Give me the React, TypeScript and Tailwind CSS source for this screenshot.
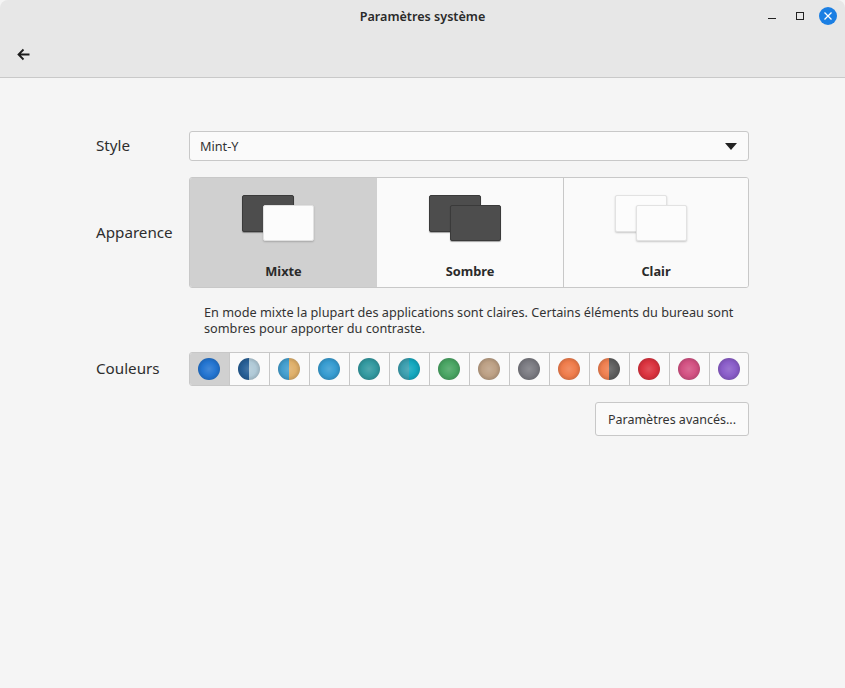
const FONT = "font-['Noto_Sans',sans-serif]";

// soft highlight in the middle, darker rim, laid over each base colour
const GLOSS = 'radial-gradient(circle at 50% 50%, rgba(255,255,255,0.16) 0%, rgba(255,255,255,0.02) 45%, rgba(0,0,0,0.28) 100%)';

const SWATCHES: string[] = [
  '#1f72d0',
  'linear-gradient(90deg, #235c94 50%, #aec8d6 50%)',
  'linear-gradient(90deg, #3f9ccd 50%, #deae67 50%)',
  '#339ad0',
  '#2f979e',
  'linear-gradient(90deg, #389cad 50%, #0ea6bd 50%)',
  '#46a360',
  '#bb9e82',
  '#78787f',
  '#ef7a48',
  'linear-gradient(90deg, #ef7d4c 50%, #5c5c5c 50%)',
  '#da2f3b',
  '#d24e80',
  '#885ac8',
];

function MiniWindows({ mode }: { mode: 'mixte' | 'sombre' | 'clair' }) {
  const dark = 'bg-[#4d4d4d] border border-[#3a3a3a] shadow-[0_1px_1px_rgba(0,0,0,0.35)]';
  const light = 'bg-[#fcfcfc] border border-[#e2e2e2] shadow-[0_1px_2px_rgba(0,0,0,0.2)]';
  return (
    <div className="relative mr-[10px] h-[47px] w-[73px]">
      <div className={`absolute left-0 top-0 h-[37px] w-[52px] rounded-[2px] ${mode === 'clair' ? light : dark}`} />
      <div className={`absolute left-[21px] top-[10px] h-[36px] w-[51px] rounded-[2px] ${mode === 'sombre' ? dark : light}`} />
    </div>
  );
}

function ThemeTile({ label, mode, active, className }: { label: string; mode: 'mixte' | 'sombre' | 'clair'; active?: boolean; className: string }) {
  return (
    <div className={`flex flex-col items-center pt-[17px] ${active ? 'bg-[#d0d0d0]' : 'bg-[#fafafa]'} ${className}`}>
      <MiniWindows mode={mode} />
      <span className="mt-[20px] text-[12.8px] leading-[18px] font-bold text-[#2a2a2a]">{label}</span>
    </div>
  );
}

export default function App() {
  return (
    <div className={`${FONT} relative h-[688px] w-[845px] overflow-hidden bg-[#f5f5f5] text-[#2e2e2e]`}>
      <header className="h-[78px] rounded-t-[8px] border-b border-[#c9c9c9] bg-[#e7e7e7]">
        <div className="relative flex h-[34px] items-center justify-center">
          <span className="text-[12.6px] font-semibold text-[#2a2a2a]">Paramètres système</span>
          <div className="absolute right-[8px] top-[7px] flex items-center">
            <svg width="10" height="10" viewBox="0 0 10 10" className="mr-[18px]">
              <path d="M1 7.5h8" stroke="#222" strokeWidth="1" />
            </svg>
            <svg width="10" height="10" viewBox="0 0 10 10" className="mr-[14px]">
              <rect x="1.5" y="1.5" width="7" height="7" fill="none" stroke="#222" strokeWidth="1" />
            </svg>
            <div className="flex h-[18px] w-[18px] items-center justify-center rounded-full bg-[#1b7fe3]">
              <svg width="10" height="10" viewBox="0 0 10 10">
                <path d="M1.5 1.5l7 7M8.5 1.5l-7 7" stroke="#fff" strokeWidth="1.3" />
              </svg>
            </div>
          </div>
        </div>
        <div className="pl-[17px] pt-[14px]">
          <svg width="13" height="13" viewBox="0 0 13 13" className="block">
            <path d="M12.5 6.5H2M6.5 1.5L1.5 6.5l5 5" fill="none" stroke="#1c1c1c" strokeWidth="1.8" />
          </svg>
        </div>
      </header>

      <main className="pl-[96px] pr-[96px] pt-[53px]">
        <div className="flex items-center">
          <label className="mb-[2px] w-[93px] text-[15.2px] leading-[20px]">Style</label>
          <div className="flex h-[30px] flex-1 items-center justify-between rounded-[3px] border border-[#c8c8c8] bg-[#fafafa] pl-[10px] pr-[11px]">
            <span className="pt-[1px] text-[12.7px] text-[#333]">Mint-Y</span>
            <svg width="12" height="7" viewBox="0 0 12 7" className="block">
              <path d="M0 0h12L6 7z" fill="#222" />
            </svg>
          </div>
        </div>

        <div className="mt-[16px] flex items-center">
          <label className="mb-[2px] w-[93px] text-[15.2px] leading-[20px]">Apparence</label>
          <div className="flex h-[111px] flex-1 overflow-hidden rounded-[3px] border border-[#c8c8c8]">
            <ThemeTile label="Mixte" mode="mixte" active className="w-[187px]" />
            <ThemeTile label="Sombre" mode="sombre" className="w-[186px]" />
            <ThemeTile label="Clair" mode="clair" className="flex-1 border-l border-[#c8c8c8]" />
          </div>
        </div>

        <p className="mt-[16px] ml-[108px] w-[540px] text-[12.7px] leading-[16px] text-[#333]">
          En mode mixte la plupart des applications sont claires. Certains éléments du bureau sont sombres pour apporter du contraste.
        </p>

        <div className="mt-[16px] flex items-center">
          <label className="mb-[2px] w-[93px] text-[15.2px] leading-[20px]">Couleurs</label>
          <div className="flex h-[34px] flex-1 overflow-hidden rounded-[3px] border border-[#c8c8c8] bg-[#fafafa]">
            {SWATCHES.map((bg, i) => (
              <div
                key={i}
                className={`flex items-center justify-center pr-[1px] ${i === 0 ? 'w-[39px] bg-[#d0d0d0]' : i === 13 ? 'flex-1 border-l border-[#c8c8c8]' : 'w-[40px] border-l border-[#c8c8c8]'}`}
              >
                <div className="h-[22px] w-[22px] rounded-full" style={{ background: `${GLOSS}, ${bg}` }} />
              </div>
            ))}
          </div>
        </div>

        <div className="mt-[16px] flex justify-end">
          <button
            type="button"
            className="h-[34px] w-[154px] rounded-[3px] border border-[#c8c8c8] bg-[#fafafa] pt-[2px] text-[12.5px] text-[#333]"
          >
            Paramètres avancés...
          </button>
        </div>
      </main>
    </div>
  );
}
